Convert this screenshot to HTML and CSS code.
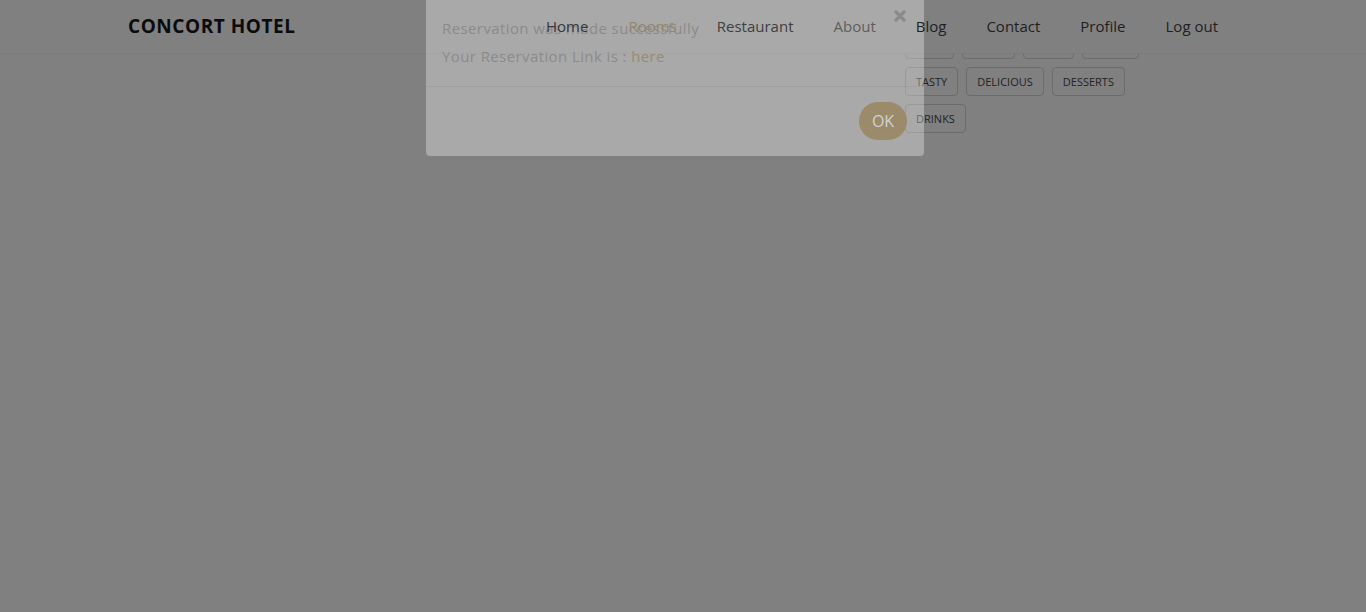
FILE: index.html
```html
<!DOCTYPE html>
<html lang="en">
<head>
<meta charset="utf-8">
<title>Concort Hotel</title>
<link rel="stylesheet" href="styles.css">
</head>
<body>
<header class="site-header">
  <div class="container header-inner">
    <a class="brand" href="#">CONCORT HOTEL</a>
    <nav class="nav">
      <a class="nav-link" href="#">Home</a>
      <a class="nav-link active" href="#">Rooms</a>
      <a class="nav-link mid" href="#">Restaurant</a>
      <a class="nav-link soft" href="#">About</a>
      <a class="nav-link" href="#">Blog</a>
      <a class="nav-link" href="#">Contact</a>
      <a class="nav-link" href="#">Profile</a>
      <a class="nav-link" href="#">Log out</a>
    </nav>
  </div>
</header>

<main class="container page">
  <div class="content"></div>
  <aside class="sidebar">
    <div class="tags">
      <a class="tag" href="#">CAKE</a>
      <a class="tag" href="#">FOOD</a>
      <a class="tag" href="#">MEAT</a>
      <a class="tag" href="#">BREAD</a>
      <a class="tag" href="#">TASTY</a>
      <a class="tag" href="#">DELICIOUS</a>
      <a class="tag" href="#">DESSERTS</a>
      <a class="tag" href="#">DRINKS</a>
    </div>
  </aside>
</main>

<div class="modal" role="dialog">
  <button class="modal-close" aria-label="Close">
    <svg width="12" height="12" viewBox="0 0 12 12"><path d="M2 2 L10 10 M10 2 L2 10" stroke="currentColor" stroke-width="3.2" stroke-linecap="round"/></svg>
  </button>
  <div class="modal-body">
    <p class="msg">Reservation was made successfully</p>
    <p class="msg">Your Reservation Link is : <a class="link" href="#">here</a></p>
  </div>
  <div class="modal-footer">
    <button class="btn-ok">OK</button>
  </div>
</div>
</body>
</html>
```

FILE: styles.css
```css
* { box-sizing: border-box; }

html, body {
  margin: 0;
  padding: 0;
}

body {
  background: #808080;
  font-family: "Open Sans", "Liberation Sans", sans-serif;
  color: #222;
  min-height: 612px;
}

a { text-decoration: none; color: inherit; }

.container {
  width: 1110px;
  margin: 0 auto;
}

.site-header {
  position: relative;
  height: 54px;
  background: #808080;
  border-bottom: 1px solid #7b7b7b;
}

.header-inner {
  display: flex;
  align-items: center;
  height: 52px;
}

.brand {
  font-family: "Open Sans", "Liberation Sans", sans-serif;
  font-weight: 700;
  font-size: 19px;
  color: #0b0b0b;
  letter-spacing: 0.55px;
  margin-right: auto;
}

.nav {
  display: flex;
  align-items: center;
}

.nav-link {
  position: relative;
  z-index: 3;
  padding: 0 20px;
  font-size: 15px;
  color: #1f1f1f;
}

.nav-link.active { color: #94866a; }
.nav-link.mid { color: #3f3f3f; }
.nav-link.soft { color: #5e5e5e; }
.nav-link:first-child { color: #383838; }

.page {
  display: flex;
  margin-top: -24px;
}

.content { flex: 1; }

.sidebar {
  width: 333px;
}

.tags {
  width: 240px;
  display: flex;
  flex-wrap: wrap;
  gap: 8px;
}

.tag {
  display: inline-flex;
  align-items: center;
  height: 29px;
  padding: 0 10px;
  border: 1px solid #6b6b6b;
  border-radius: 4px;
  font-size: 11px;
  color: #222;
}

.modal {
  position: absolute;
  top: 0;
  left: 426px;
  width: 498px;
  height: 156px;
  z-index: 2;
  background: rgba(255, 255, 255, 0.32);
  border-radius: 0 0 4px 4px;
}

.modal-close {
  position: absolute;
  top: 10px;
  right: 18px;
  padding: 0;
  border: 0;
  background: none;
  color: #8a8a8a;
  line-height: 0;
}

.modal-body {
  height: 87px;
  padding: 14px 16px 0;
  border-bottom: 1px solid rgba(0, 0, 0, 0.05);
}

.msg {
  margin: 0;
  font-size: 15px;
  line-height: 28px;
  letter-spacing: 0.4px;
  color: #8b8b8b;
}

.link { color: #998b70; }

.modal-footer {
  display: flex;
  justify-content: flex-end;
  padding: 15px 17px 0;
}

.btn-ok {
  width: 48px;
  height: 38px;
  border: 0;
  border-radius: 19px;
  background: #9b8b6b;
  color: #d2d2d2;
  font-family: "Open Sans", "Liberation Sans", sans-serif;
  font-size: 16px;
  font-weight: 500;
  padding: 0;
}
```
